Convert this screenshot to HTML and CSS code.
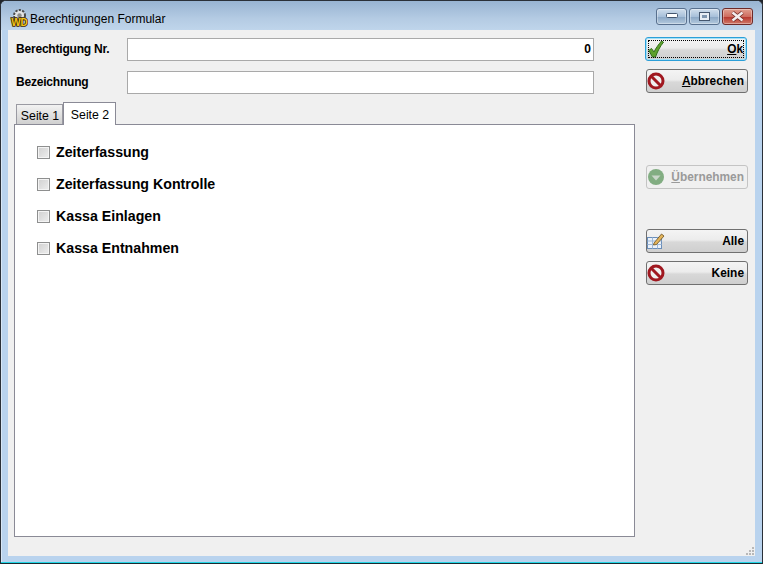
FILE: index.html
```html
<!DOCTYPE html>
<html lang="de">
<head>
<meta charset="utf-8">
<title>Berechtigungen Formular</title>
<link rel="stylesheet" href="styles.css">
</head>
<body>
<div class="window">
  <header class="titlebar">
    <svg class="app-icon" width="18" height="18" viewBox="0 0 18 18">
      <circle cx="9.500" cy="6.500" r="5.500" fill="#e4e4e4" stroke="#4a4a4a" stroke-width="2" stroke-dasharray="2.200 1.300"/>
      <circle cx="9.500" cy="6.500" r="2.200" fill="#8c8c8c"/>
      <text x="9.500" y="16.500" class="app-icon-text" text-anchor="middle">WD</text>
    </svg>
    <span class="title">Berechtigungen Formular</span>
    <div class="controls">
      <div class="ctl">
        <svg width="12" height="6" viewBox="0 0 12 6"><rect x="0.500" y="0.500" width="11" height="4" rx="1" fill="#fff" stroke="#44566e"/></svg>
      </div>
      <div class="ctl">
        <svg width="11" height="9" viewBox="0 0 11 9"><rect x="0.500" y="0.500" width="10" height="8" fill="#e8eef5" stroke="#44566e"/><rect x="3" y="3" width="5" height="3" fill="#7f96b0"/></svg>
      </div>
      <div class="ctl ctl-close">
        <svg width="15" height="11" viewBox="0 0 15 11"><path d="M2.500 1.500 L12.500 9.500 M12.500 1.500 L2.500 9.500" stroke="#6e2a24" stroke-width="4"/><path d="M2.500 1.500 L12.500 9.500 M12.500 1.500 L2.500 9.500" stroke="#f4eeee" stroke-width="2.600"/></svg>
      </div>
    </div>
  </header>
  <div class="client">
    <main class="main">
      <div class="field">
        <label class="field-label">Berechtigung Nr.</label>
        <div class="input input-num">0</div>
      </div>
      <div class="field">
        <label class="field-label">Bezeichnung</label>
        <div class="input"></div>
      </div>
      <div class="tabs">
        <div class="tab">Seite 1</div>
        <div class="tab tab-active">Seite 2</div>
      </div>
      <div class="panel">
        <div class="check"><span class="box"></span>Zeiterfassung</div>
        <div class="check"><span class="box"></span>Zeiterfassung Kontrolle</div>
        <div class="check"><span class="box"></span>Kassa Einlagen</div>
        <div class="check"><span class="box"></span>Kassa Entnahmen</div>
      </div>
    </main>
    <aside class="side">
      <div class="btn btn-default">
        <span class="focus"></span>
        <svg class="btn-icon" width="16" height="18" viewBox="0 0 16 18"><path d="M0.800 10.500 L3.500 8.500 L6 12 C8 8 10.500 4.500 13.500 1 L15.500 2.200 C12 6.500 9.500 11.500 7.500 17 L4.500 17 Z" fill="#5da02c" stroke="#33701a" stroke-width="1"/></svg>
        <span class="btn-label"><u>O</u>k</span>
      </div>
      <div class="btn">
        <svg class="btn-icon" width="18" height="18" viewBox="0 0 18 18"><circle cx="9" cy="9" r="7" fill="#f0f0f0" stroke="#a01820" stroke-width="3"/><path d="M4 4 L14 14" stroke="#a01820" stroke-width="3"/></svg>
        <span class="btn-label"><u>A</u>bbrechen</span>
      </div>
      <div class="btn btn-disabled btn-gap1">
        <svg class="btn-icon" width="18" height="18" viewBox="0 0 18 18"><circle cx="9" cy="9" r="8" fill="#82ad82"/><path d="M4.500 7.500 H13.500 L9 12.500 Z" fill="#c9d6c9"/></svg>
        <span class="btn-label"><u>Ü</u>bernehmen</span>
      </div>
      <div class="btn btn-gap2">
        <svg class="btn-icon" width="18" height="18" viewBox="0 0 18 18"><rect x="0.500" y="5.500" width="14" height="11" fill="#eaf1fa" stroke="#6a8db8"/><path d="M0.500 9 H14.500 M0.500 12.500 H14.500 M5.500 5.500 V16.500 M10.500 5.500 V16.500" stroke="#9db8d8"/><path d="M7 11 L14.500 2 L17 4 L9.500 12.500 L6.500 13 Z" fill="#e3b45a" stroke="#6b5020" stroke-width="0.800"/></svg>
        <span class="btn-label">Alle</span>
      </div>
      <div class="btn">
        <svg class="btn-icon" width="18" height="18" viewBox="0 0 18 18"><circle cx="9" cy="9" r="7" fill="#f0f0f0" stroke="#a01820" stroke-width="3"/><path d="M4 4 L14 14" stroke="#a01820" stroke-width="3"/></svg>
        <span class="btn-label">Keine</span>
      </div>
    </aside>
    <svg class="grip" width="10" height="10" viewBox="0 0 10 10"><path d="M7 1h2v2H7zM4 4h2v2H4zM7 4h2v2H7zM1 7h2v2H1zM4 7h2v2H4zM7 7h2v2H7z" fill="#b8b8b8"/></svg>
  </div>
</div>
</body>
</html>
```

FILE: styles.css
```css
* { box-sizing: border-box; }
html, body { margin: 0; padding: 0; }
body {
  width: 763px;
  height: 564px;
  background: #20242a;
  font-family: "Liberation Sans", Arial, sans-serif;
  overflow: hidden;
}
.window {
  width: 763px;
  height: 564px;
  display: flex;
  flex-direction: column;
  background: #b9d3ee;
  border: 1px solid #2a3038;
  border-bottom: 1px solid #1a2a30;
  border-radius: 6px 6px 0 0;
  box-shadow: inset 0 -1px 0 #22d6e6, inset 1px 1px 0 rgba(255,255,255,0.45);
  padding: 0 7px 7px 7px;
}
.titlebar {
  height: 29px;
  margin: 0 -7px;
  padding: 6px 9px 0 9px;
  display: flex;
  align-items: center;
  flex: none;
  border-radius: 5px 5px 0 0;
  background: linear-gradient(#98b4d2, #b4cbe3 60%, #bfd5eb);
}
.app-icon { flex: none; margin-top: -1px; }
.app-icon-text {
  font-family: "Liberation Sans", Arial, sans-serif;
  font-weight: bold;
  font-size: 10px;
  fill: #f2c41c;
  stroke: #3a2400;
  stroke-width: 1.6px;
  paint-order: stroke;
}
.title {
  margin-left: 2px;
  font-size: 12px;
  color: #000;
}
.controls {
  margin-left: auto;
  display: flex;
  gap: 2px;
  margin-top: -5px;
}
.ctl {
  width: 31px;
  height: 17px;
  border: 1px solid #58708e;
  border-radius: 3px;
  background: linear-gradient(#d0deec, #a8c0da 50%, #8ca8c6 55%, #b4cade);
  display: flex;
  align-items: center;
  justify-content: center;
  box-shadow: inset 0 0 0 1px rgba(255,255,255,0.35);
}
.ctl-close {
  border-color: #6e2a28;
  background: linear-gradient(#e0a090, #cf6d60 50%, #b83a30 55%, #d07868);
}
.client {
  flex: 1;
  background: #f0f0f0;
  display: flex;
  position: relative;
  min-height: 0;
}
.main {
  width: 638px;
  padding: 8px 0 0 6px;
  display: flex;
  flex-direction: column;
}
.field {
  display: flex;
  align-items: center;
  height: 23px;
  margin-bottom: 10px;
  padding-left: 2px;
}
.field-label {
  width: 111px;
  flex: none;
  font-size: 12px;
  letter-spacing: -0.2px;
  font-weight: bold;
  color: #000;
  position: relative;
  top: -1px;
}
.input {
  width: 467px;
  height: 23px;
  background: #fff;
  border: 1px solid #a9a9a9;
  font-size: 12px;
  font-weight: bold;
  line-height: 21px;
  padding: 0 2px;
}
.input-num { text-align: right; }
.tabs {
  display: flex;
  align-items: flex-end;
  padding-left: 2px;
  margin-top: -2px;
  position: relative;
  z-index: 1;
  height: 23px;
  margin-bottom: -1px;
}
.tab {
  width: 47px;
  height: 20px;
  margin-bottom: 1px;
  padding-left: 1px;
  border: 1px solid #9a9aa2;
  border-bottom: none;
  background: linear-gradient(#f2f2f2, #d0d0d0);
  font-size: 12.3px;
  color: #000;
  text-align: center;
  line-height: 23px;
}
.tab-active {
  width: 53px;
  height: 23px;
  margin-bottom: 0;
  padding-left: 1px;
  background: #fff;
  line-height: 24px;
  border-color: #8a8a96;
}
.panel {
  width: 621px;
  height: 413px;
  background: #fff;
  border: 1px solid #8a8a96;
  padding: 18px 0 0 22px;
  display: flex;
  flex-direction: column;
  gap: 14px;
}
.check {
  height: 18px;
  display: flex;
  align-items: center;
  gap: 6px;
  font-size: 14.2px;
  font-weight: bold;
  color: #000;
}
.box {
  width: 13px;
  height: 13px;
  flex: none;
  border: 1px solid #8e8f8f;
  background: linear-gradient(135deg, #d0d0d0, #eeeeee);
  box-shadow: inset 0 0 0 1px #f4f4f4;
}
.side {
  padding: 7px 0 0 0;
  display: flex;
  flex-direction: column;
  gap: 8px;
  width: 102px;
}
.btn {
  width: 102px;
  height: 24px;
  flex: none;
  position: relative;
  display: flex;
  align-items: center;
  justify-content: space-between;
  padding: 0 3px 0 0;
  border: 1px solid #707070;
  border-radius: 3px;
  background: linear-gradient(#f4f4f4, #ececec 45%, #d8d8d8 55%, #cfcfcf);
  font-size: 11.9px;
  font-weight: bold;
  color: #000;
}
.btn-default {
  margin-left: -1px;
  padding-left: 2px;
  border-color: #2c9fd8;
  box-shadow: inset 0 0 0 1px #a0e0f8;
}
.focus {
  position: absolute;
  inset: 2px;
  border: 1px dotted #000;
}
.btn-icon { flex: none; }
.btn-disabled {
  border-color: #c4c4c4;
  background: #f0f0f0;
  color: #9a9a9a;
}
.btn-gap1 { margin-top: 64px; }
.btn-gap2 { margin-top: 32px; }
.grip {
  position: absolute;
  right: 0;
  bottom: 0;
}
```
